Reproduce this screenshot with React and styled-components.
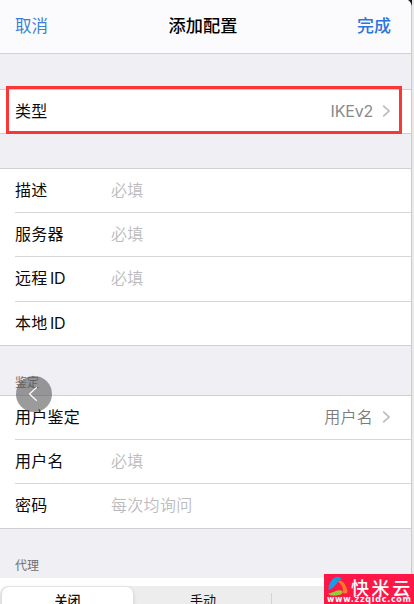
import React from "react";
import styled, { createGlobalStyle } from "styled-components";

const GlobalStyle = createGlobalStyle`
  * { box-sizing: border-box; }
  body {
    margin: 0;
    background: #e9e9ea;
    overflow: hidden;
    font-family: Inter, "Noto Sans CJK SC", sans-serif;
  }
`;

const Page = styled.div`
  position: relative;
  width: 414px;
  height: 604px;
  overflow: hidden;
  background: #e9e9ea;
`;

const Screen = styled.main`
  display: flex;
  flex-direction: column;
  width: 412px;
  height: 604px;
  overflow: hidden;
  background: #efeff4;
  border-right: 1px solid #cbcbce;
`;

const Header = styled.header`
  display: grid;
  grid-template-columns: 1fr auto 1fr;
  align-items: center;
  flex: none;
  height: 54px;
  padding: 0 20px 2px 15px;
  background: #fbfbfd;
  border-bottom: 1px solid #d2d2d5;
`;

const NavButton = styled.button`
  justify-self: ${(p) => (p.$end ? "end" : "start")};
  padding: 0;
  border: 0;
  background: none;
  color: ${(p) => (p.$end ? "#2b76de" : "#3b80d8")};
  font: ${(p) => (p.$end ? 500 : 400)} ${(p) => (p.$end ? 17 : 16.5)}px/24px Inter, "Noto Sans CJK SC", sans-serif;
`;

const Title = styled.h1`
  margin: 0;
  font-size: 17.2px;
  line-height: 24px;
  font-weight: 500;
  color: #000;
`;

const Group = styled.section`
  flex: none;
  background: #fff;
  border-top: 1px solid #d0d0d4;
  border-bottom: 1px solid #d0d0d4;
  margin-top: ${(p) => p.$gap}px;
`;

const Caption = styled.h2`
  display: flex;
  flex: none;
  align-items: flex-end;
  height: 49px;
  margin: 0;
  padding: 0 15px 3px;
  font-size: 12px;
  line-height: 18px;
  font-weight: 400;
  color: #6d6d72;
`;

const Row = styled.div`
  display: flex;
  align-items: center;
  height: ${(p) => p.$height || 44}px;
  margin-left: 15px;
  padding: 0 20px 2px 0;
  & + & { border-top: 1px solid #d7d7da; }
`;

const Label = styled.span`
  width: 96px;
  font-size: 16px;
  line-height: 24px;
  letter-spacing: 0.25px;
  color: #0b0b0b;
  white-space: nowrap;
  span { margin-left: 2.5px; letter-spacing: -0.3px; }
`;

const Placeholder = styled.span`
  font-size: 16px;
  line-height: 24px;
  letter-spacing: 0.3px;
  font-weight: 350;
  color: #bcbcbe;
`;

const Value = styled.span`
  display: flex;
  align-items: center;
  gap: 9px;
  margin-left: auto;
  font-size: 16px;
  line-height: 24px;
  letter-spacing: ${(p) => (p.$latin ? "-0.2px" : "0.25px")};
  font-weight: ${(p) => (p.$latin ? 400 : 350)};
  color: ${(p) => (p.$latin ? "#88888b" : "#7c7c7f")};
`;

const Highlight = styled.div`
  position: absolute;
  left: 6px;
  top: 86px;
  width: 396px;
  height: 48px;
  border: 3px solid #fb3636;
`;

const BackBubble = styled.button`
  position: absolute;
  left: 16px;
  top: 376px;
  display: grid;
  place-items: center;
  width: 36px;
  height: 36px;
  padding: 0 2px 0 0;
  border: 0;
  border-radius: 50%;
  background: rgba(88, 88, 88, 0.6);
`;

const ProxyPanel = styled.section`
  flex: none;
  height: 40px;
  padding: 8px 14px 0 0;
  background: #fff;
`;

const Segments = styled.div`
  display: grid;
  grid-template-columns: 131px 138px 1fr;
  height: 32px;
  padding: 1px 2px;
  border-radius: 8px;
  background: #ededee;
`;

const Segment = styled.div`
  height: 31px;
  padding: 3px 0 0 ${(p) => (p.$active ? 0 : 2)}px;
  border-radius: 7px;
  font-size: 13px;
  line-height: 20px;
  font-weight: ${(p) => (p.$active ? 500 : 400)};
  text-align: center;
  color: #111;
  background: ${(p) => (p.$active ? "#fff" : "transparent")};
  box-shadow: ${(p) => (p.$active ? "0 1px 4px rgba(0,0,0,.16)" : "none")};
`;

const LastSegment = styled.div`
  height: 24px;
  margin-top: 6px;
  border-left: 1px solid #d3d3d5;
`;

const Corner = styled.svg`
  position: absolute;
  right: 0;
  top: 0;
`;

const Brand = styled.aside`
  position: absolute;
  left: 324px;
  top: 574px;
  display: grid;
  grid-template-columns: 24px 1fr;
  grid-template-rows: 21px 8px;
  width: 90px;
  height: 30px;
  padding-left: 3px;
  background: #fd1746;
  color: #fff;
`;

const BrandMark = styled.svg`
  margin-top: 2px;
`;

const BrandName = styled.div`
  padding-top: 4px;
  font: 500 18px/19px "Noto Sans CJK SC", sans-serif;
  letter-spacing: 2.6px;
  white-space: nowrap;
`;

const BrandUrl = styled.div`
  grid-column: 1 / -1;
  padding-top: 1px;
  font: 700 8px/8px "DejaVu Sans", sans-serif;
  letter-spacing: 0.72px;
  white-space: nowrap;
`;

const Chevron = () => (
  <svg width="9" height="14" viewBox="0 0 9 14" fill="none">
    <path d="M1.2 1.6 7 7 1.2 12.4" stroke="#bcbcc0" strokeWidth="1.7" />
  </svg>
);

function Field({ label, latin, hint, value, latinValue, height }) {
  return (
    <Row $height={height}>
      <Label>{label}{latin && <span>{latin}</span>}</Label>
      {hint && <Placeholder>{hint}</Placeholder>}
      {value && <Value $latin={latinValue}>{value}<Chevron /></Value>}
    </Row>
  );
}

export default function App() {
  return (
    <Page>
      <GlobalStyle />
      <Screen>
        <Header>
          <NavButton>取消</NavButton>
          <Title>添加配置</Title>
          <NavButton $end>完成</NavButton>
        </Header>
        <Group $gap={35}>
          <Field label="类型" value="IKEv2" latinValue height={43} />
        </Group>
        <Group $gap={34}>
          <Field label="描述" hint="必填" height={43} />
          <Field label="服务器" hint="必填" />
          <Field label="远程" latin="ID" hint="必填" height={45} />
          <Field label="本地" latin="ID" />
        </Group>
        <Caption>鉴定</Caption>
        <Group $gap={0}>
          <Field label="用户鉴定" value="用户名" height={43} />
          <Field label="用户名" hint="必填" />
          <Field label="密码" hint="每次均询问" height={45} />
        </Group>
        <Caption>代理</Caption>
        <ProxyPanel>
          <Segments>
            <Segment $active>关闭</Segment>
            <Segment>手动</Segment>
            <LastSegment />
          </Segments>
        </ProxyPanel>
      </Screen>
      <Highlight />
      <BackBubble aria-label="返回">
        <svg width="10" height="16" viewBox="0 0 10 16" fill="none">
          <path d="M8.8 1.2 1.5 8l7.3 6.8" stroke="#fff" strokeWidth="1.2" />
        </svg>
      </BackBubble>
      <Corner width="11" height="8" viewBox="0 0 11 8">
        <path d="M5 0h4v6C8 3 7 1 5 0Z" fill="#17171c" />
      </Corner>
      <Brand>
        <BrandMark width="22" height="21" viewBox="0 0 22 22">
          <path d="M1 15C1 8 5 2 9 1c3-.7 6 1 6 3-5-1-5 8-14 11Z" fill="#159de5" />
          <path d="M11 6c4-4 9 4 10 10 0 3-4 3-5 1 1-4-1-8-5-11Z" fill="#fa7b23" />
          <path d="M1 18c5 0 8-4 13-3 4 2 1 5-3 5-4 1-9 1-10-2Z" fill="#91cf36" />
        </BrandMark>
        <BrandName>快米云</BrandName>
        <BrandUrl>www.zzqidc.com</BrandUrl>
      </Brand>
    </Page>
  );
}
